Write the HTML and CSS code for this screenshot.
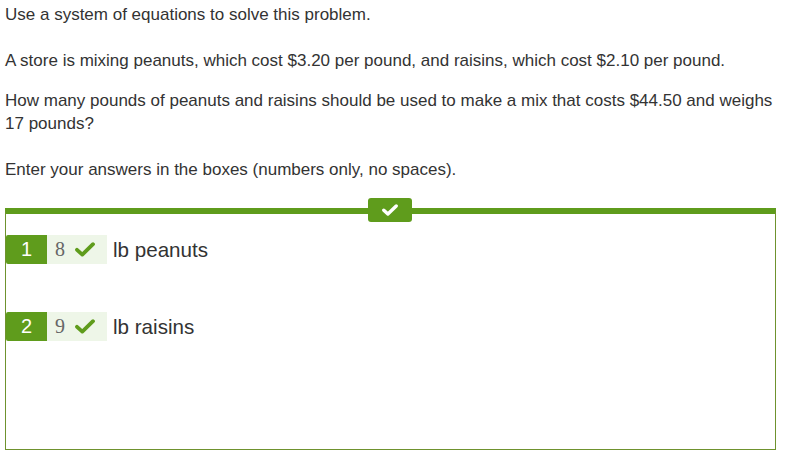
FILE: index.html
```html
<!DOCTYPE html>
<html>
<head>
<meta charset="utf-8">
<link rel="stylesheet" href="styles.css">
</head>
<body>
<div class="page">
  <div class="question">
    <p class="para">Use a system of equations to solve this problem.<br><br>A store is mixing peanuts, which cost $3.20 per pound, and raisins, which cost $2.10 per pound.</p>
    <p class="para">How many pounds of peanuts and raisins should be used to make a mix that costs $44.50 and weighs 17 pounds?<br><br>Enter your answers in the boxes (numbers only, no spaces).</p>
  </div>
  <div class="answer-box">
    <div class="badge">
      <svg width="16" height="12" viewBox="0 0 16 12"><path d="M1.8 6.2 L5.9 10 L14.2 2" fill="none" stroke="#fff" stroke-width="3.4" stroke-linecap="round" stroke-linejoin="round"/></svg>
    </div>
    <div class="row">
      <span class="num">1</span>
      <span class="ans"><span class="val">8</span><svg class="chk" width="20" height="15" viewBox="0 0 20 15"><path d="M2 7.8 L7.3 12.6 L18 2.2" fill="none" stroke="#5f9c1c" stroke-width="3.8" stroke-linecap="round" stroke-linejoin="round"/></svg></span>
      <span class="label">lb peanuts</span>
    </div>
    <div class="row">
      <span class="num">2</span>
      <span class="ans"><span class="val">9</span><svg class="chk" width="20" height="15" viewBox="0 0 20 15"><path d="M2 7.8 L7.3 12.6 L18 2.2" fill="none" stroke="#5f9c1c" stroke-width="3.8" stroke-linecap="round" stroke-linejoin="round"/></svg></span>
      <span class="label">lb raisins</span>
    </div>
  </div>
</div>
</body>
</html>
```
FILE: styles.css
```css
html, body {
  margin: 0;
  padding: 0;
  background: #fff;
}
.page {
  padding: 3px 10px 0 5px;
  font-family: "Liberation Sans", Arial, sans-serif;
  color: #333;
}
.question {
  font-size: 17px;
  line-height: 23px;
}
.para {
  margin: 0 0 17px 0;
}
.para:last-child {
  margin-bottom: 0;
}
.answer-box {
  position: relative;
  box-sizing: border-box;
  margin-top: 27px;
  width: 771px;
  height: 242px;
  border-top: 6px solid #5f9c1c;
  border-left: 1px solid #6f922e;
  border-right: 1px solid #6f922e;
  border-bottom: 1px solid #6f922e;
  padding-top: 21px;
  display: flex;
  flex-direction: column;
  gap: 48px;
}
.badge {
  position: absolute;
  top: -16px;
  left: 362px;
  width: 44px;
  height: 24px;
  background: #5f9c1c;
  border-radius: 3px;
  display: flex;
  align-items: center;
  justify-content: center;
}
.row {
  display: flex;
  align-items: center;
  height: 29px;
}
.num {
  width: 41px;
  height: 29px;
  background: #5f9c1c;
  color: #fff;
  font-size: 20px;
  display: flex;
  align-items: center;
  justify-content: center;
  border-radius: 2px 0 0 2px;
}
.ans {
  width: 60px;
  height: 29px;
  background: #eef6e8;
  display: flex;
  align-items: center;
  padding-left: 8px;
  box-sizing: border-box;
}
.val {
  font-family: "Liberation Serif", "Times New Roman", serif;
  font-size: 20px;
  color: #666;
  width: 20px;
}
.chk {
  display: block;
}
.label {
  margin-left: 6px;
  font-size: 20.6px;
  color: #333;
}
```
